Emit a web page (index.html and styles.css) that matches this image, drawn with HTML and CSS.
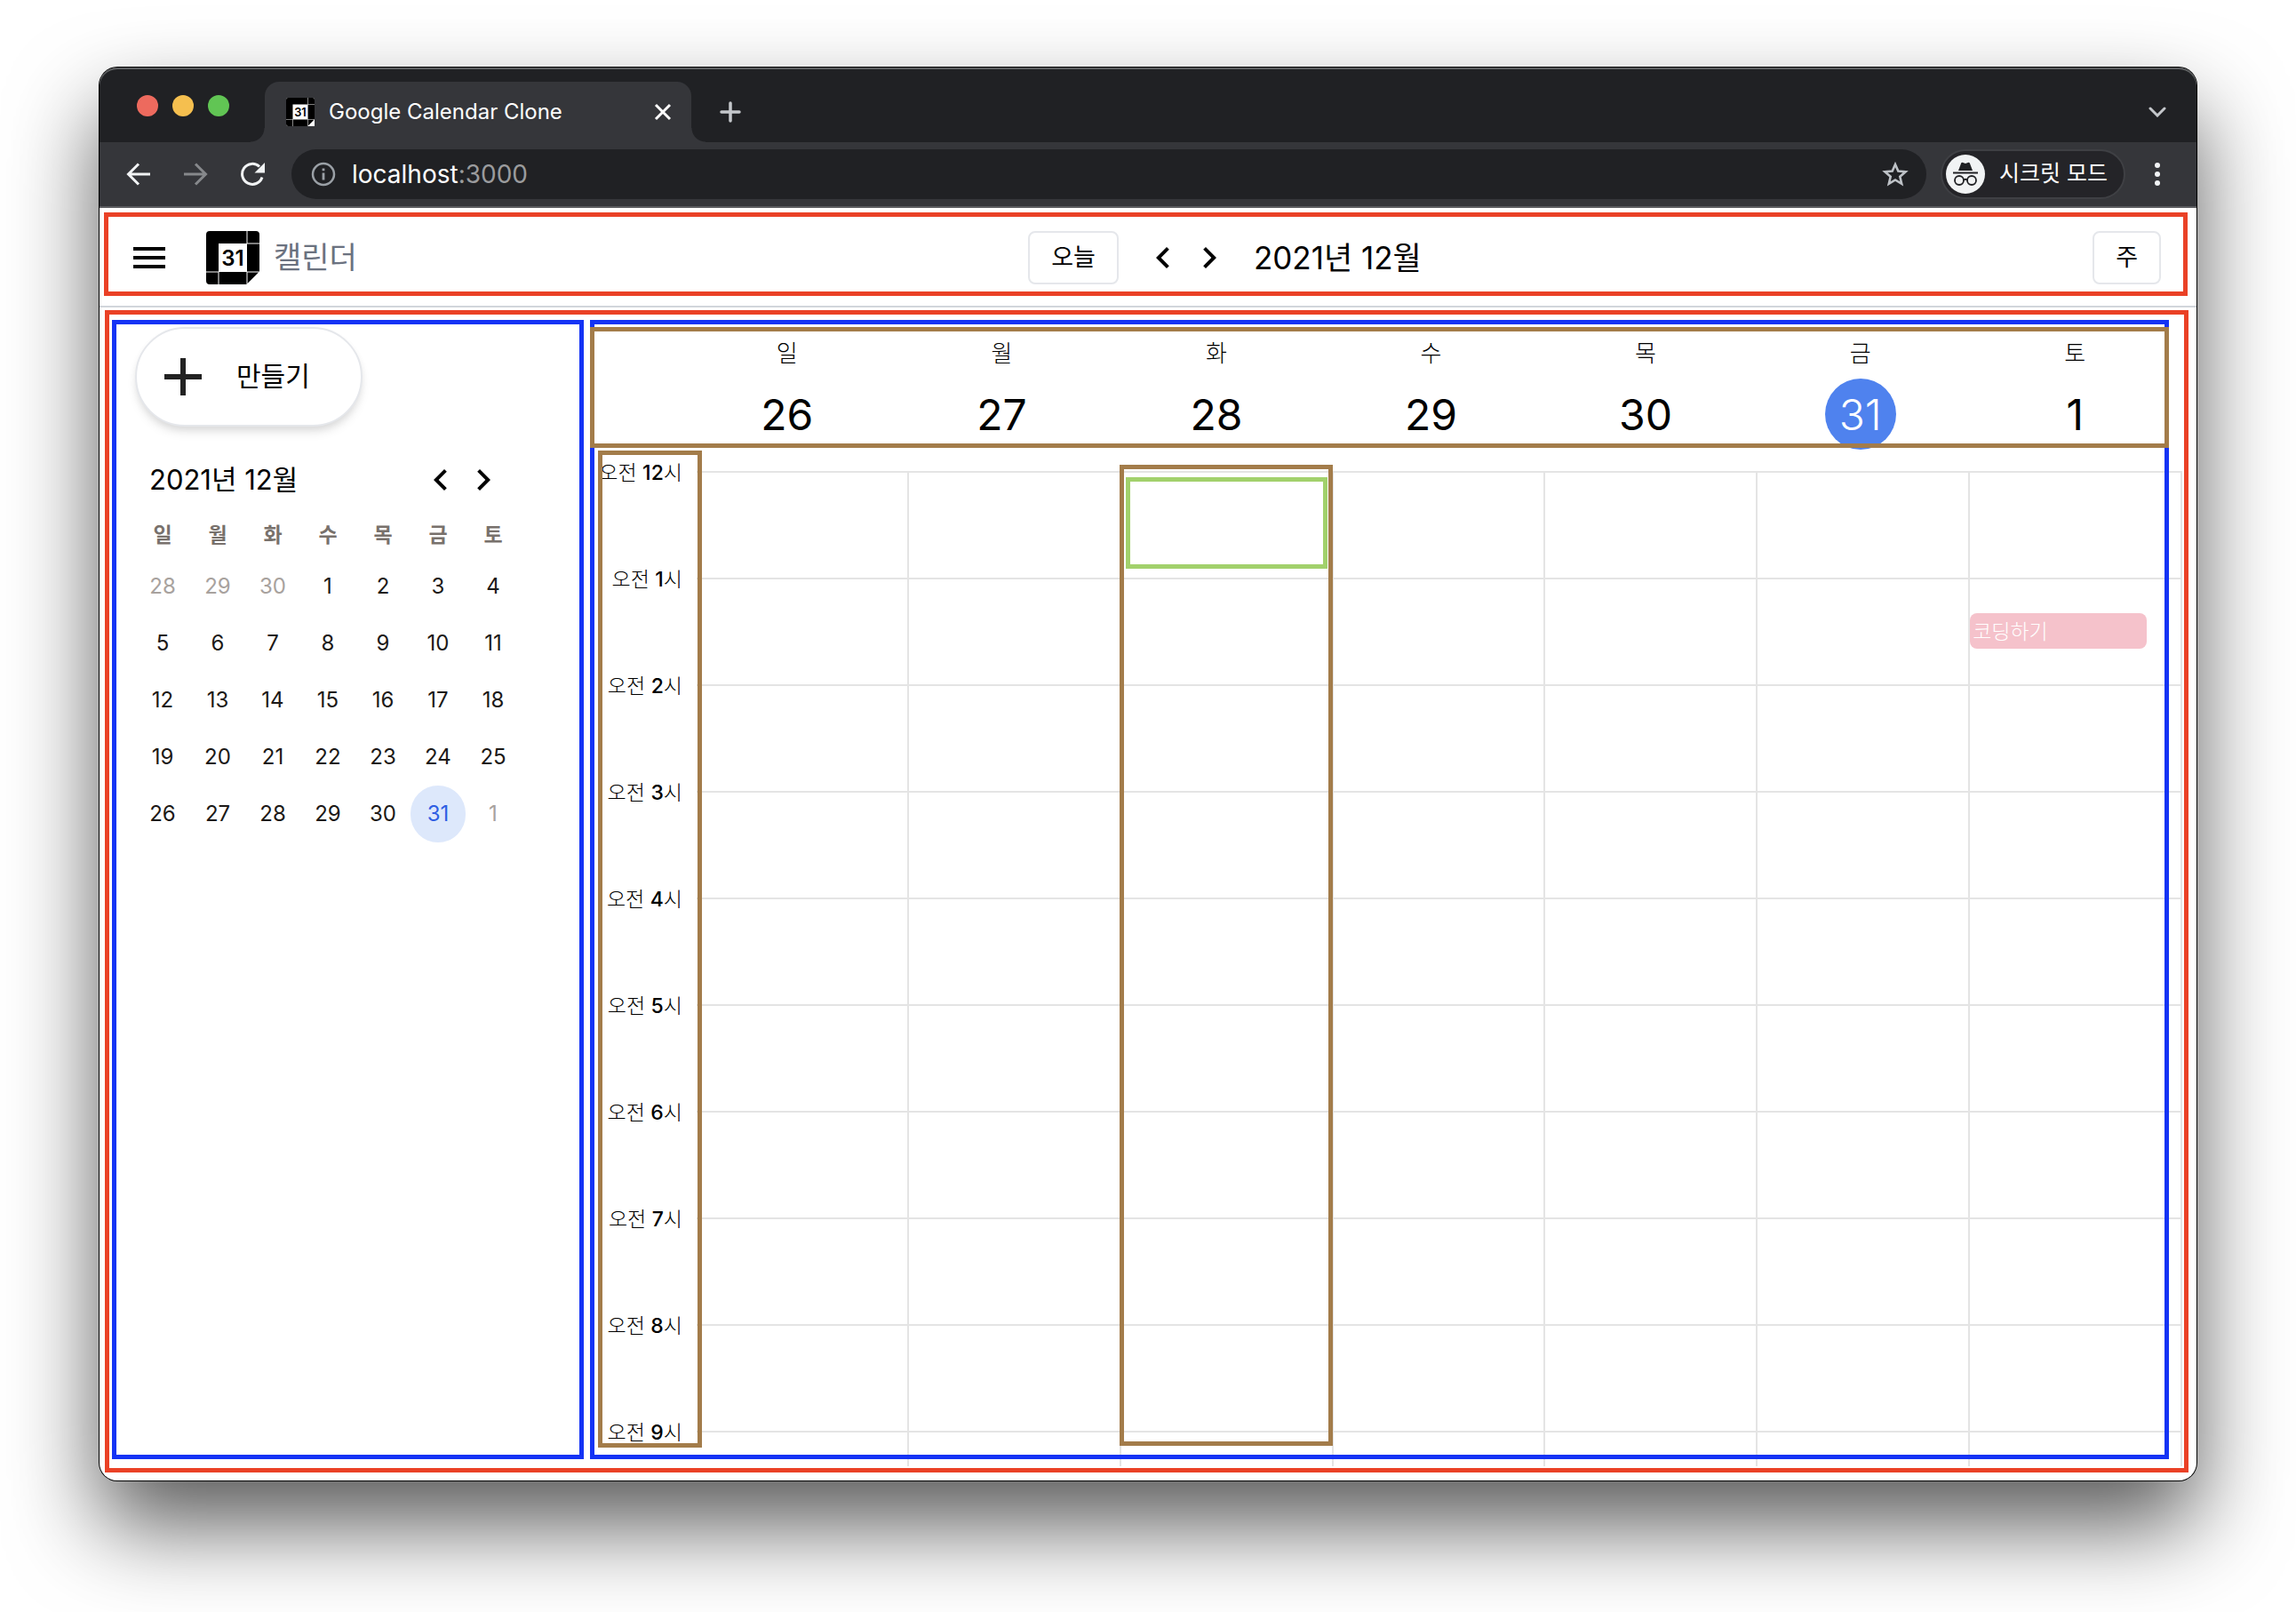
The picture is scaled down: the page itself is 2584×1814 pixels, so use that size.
FILE: index.html
```html
<!DOCTYPE html>
<html lang="ko">
<head>
<meta charset="utf-8">
<meta name="viewport" content="width=device-width, initial-scale=1">
<title>Google Calendar Clone</title>
<link rel="stylesheet" href="styles.css">
</head>
<body>
<svg class="sprite" aria-hidden="true">
  <symbol id="logo" viewBox="0 0 60 60">
    <path fill="#fff" d="M4 0h52a4 4 0 0 1 4 4v56H4a4 4 0 0 1-4-4V4a4 4 0 0 1 4-4z"/>
    <path d="M4 0h41.500v14H14v31.500H0V4a4 4 0 0 1 4-4zM46.500 0H56a4 4 0 0 1 4 4v9.500H46.500zM46 14.500h14v31H46zM14.500 46h31v14h-31zM0 46.500h13.500V60H4a4 4 0 0 1-4-4zM46.500 46.500H59L46.500 59z"/>
    <text x="30" y="39" text-anchor="middle" class="logo-text">31</text>
  </symbol>
  <symbol id="prev" viewBox="0 0 24 24"><path d="M15.41 7.41 14 6l-6 6 6 6 1.41-1.41L10.83 12z"/></symbol>
  <symbol id="next" viewBox="0 0 24 24"><path d="M10 6 8.59 7.41 13.17 12l-4.58 4.59L10 18l6-6z"/></symbol>
</svg>

<div class="window">
  <div class="chrome">
    <div class="tabs">
      <div class="lights"><span class="light red"></span><span class="light yellow"></span><span class="light green"></span></div>
      <div class="tab">
        <svg class="favicon"><use href="#logo"/></svg>
        <span class="tab-title">Google Calendar Clone</span>
        <button class="plain" aria-label="탭 닫기"><svg width="20" height="20" viewBox="0 0 20 20" fill="none" stroke="#fff" stroke-width="3"><path d="M2 2l16 16M18 2 2 18"/></svg></button>
      </div>
      <button class="plain new-tab" aria-label="새 탭"><svg width="24" height="24" viewBox="0 0 24 24" fill="none" stroke="#c4c7cb" stroke-width="3.500" stroke-linecap="round"><path d="M12 2v20M2 12h20"/></svg></button>
      <button class="plain tab-search" aria-label="탭 검색"><svg width="20" height="12" viewBox="0 0 20 12" fill="none" stroke="#c4c7cb" stroke-width="3" stroke-linecap="round"><path d="M2 2l8 8 8-8"/></svg></button>
    </div>
    <div class="toolbar">
      <button class="plain" aria-label="뒤로"><svg width="28" height="28" viewBox="0 0 28 28" fill="none" stroke="#f1f3f4" stroke-width="3"><path d="M27 14H3M14 2.500 2.500 14 14 25.500"/></svg></button>
      <button class="plain" aria-label="앞으로"><svg width="28" height="28" viewBox="0 0 28 28" fill="none" stroke="#86888b" stroke-width="3"><path d="M1 14h24M14 2.500 25.500 14 14 25.500"/></svg></button>
      <button class="plain" aria-label="새로고침"><svg width="28" height="28" viewBox="0 0 28 28"><path fill="none" stroke="#f1f3f4" stroke-width="3" d="M25 17.500A11.500 11.500 0 1 1 22 5.500"/><path fill="#f1f3f4" d="M28 1v11.500H16.500z"/></svg></button>
      <div class="address">
        <svg width="28" height="28" viewBox="0 0 28 28"><circle cx="14" cy="14" r="12" fill="none" stroke="#9aa0a6" stroke-width="2.500"/><path fill="#9aa0a6" d="M12.600 12.500h2.800v8h-2.800zM12.600 7.500h2.800v2.800h-2.800z"/></svg>
        <span class="url">localhost<span class="port">:3000</span></span>
        <button class="plain" aria-label="북마크"><svg width="30" height="30" viewBox="0 0 30 30" fill="none" stroke="#bdc1c6" stroke-width="2.600"><path d="M15 4l3.300 7.600 8.300.7-6.300 5.400 1.900 8.100L15 21.500l-7.200 4.300 1.900-8.100-6.300-5.400 8.300-.7z"/></svg></button>
      </div>
      <div class="incognito">
        <svg width="44" height="44" viewBox="0 0 44 44"><circle cx="22" cy="22" r="22" fill="#f1f3f4"/><g fill="#202124"><path d="M14 18 17 10q.6-1.600 2.200-1l2.800.9 2.800-.9q1.600-.6 2.200 1l3 8zM8 19.500h28v2H8z"/></g><g fill="none" stroke="#202124" stroke-width="1.800"><circle cx="15" cy="29" r="5"/><circle cx="29" cy="29" r="5"/><path d="M20 28.500q2-1.500 4 0"/></g></svg>
        <span>시크릿 모드</span>
      </div>
      <button class="plain menu-dots" aria-label="메뉴"><svg width="8" height="28" viewBox="0 0 8 28" fill="#f1f3f4"><circle cx="4" cy="4" r="3"/><circle cx="4" cy="14" r="3"/><circle cx="4" cy="24" r="3"/></svg></button>
    </div>
  </div>

  <header class="app-header">
    <div class="brand">
      <button class="plain" aria-label="사이드바"><svg width="36" height="24" viewBox="0 0 36 24"><path d="M0 0h36v4H0zM0 10h36v4H0zM0 20h36v4H0z"/></svg></button>
      <svg class="logo"><use href="#logo"/></svg>
      <h1 class="brand-name">캘린더</h1>
    </div>
    <div class="period">
      <button class="outlined">오늘</button>
      <div class="pager">
        <button class="plain" aria-label="이전 주"><svg class="chevron"><use href="#prev"/></svg></button>
        <button class="plain" aria-label="다음 주"><svg class="chevron"><use href="#next"/></svg></button>
      </div>
      <h2 class="period-title">2021년 12월</h2>
    </div>
    <button class="outlined">주</button>
    <div class="frame frame-header"></div>
  </header>

  <main class="app-main">
    <aside class="sidebar">
      <button class="create">
        <svg width="42" height="42" viewBox="0 0 42 42"><path fill="#222" d="M18 0h6v18h18v6H24v18h-6V24H0v-6h18z"/></svg>
        <span>만들기</span>
      </button>
      <div class="mini-head">
        <h3 class="mini-title">2021년 12월</h3>
        <button class="plain" aria-label="이전 달"><svg class="chevron"><use href="#prev"/></svg></button>
        <button class="plain" aria-label="다음 달"><svg class="chevron"><use href="#next"/></svg></button>
      </div>
      <table class="mini">
        <thead><tr><th>일</th><th>월</th><th>화</th><th>수</th><th>목</th><th>금</th><th>토</th></tr></thead>
        <tbody>
          <tr><td class="other">28</td><td class="other">29</td><td class="other">30</td><td>1</td><td>2</td><td>3</td><td>4</td></tr>
          <tr><td>5</td><td>6</td><td>7</td><td>8</td><td>9</td><td>10</td><td>11</td></tr>
          <tr><td>12</td><td>13</td><td>14</td><td>15</td><td>16</td><td>17</td><td>18</td></tr>
          <tr><td>19</td><td>20</td><td>21</td><td>22</td><td>23</td><td>24</td><td>25</td></tr>
          <tr><td>26</td><td>27</td><td>28</td><td>29</td><td>30</td><td class="selected">31</td><td class="other">1</td></tr>
        </tbody>
      </table>
      <div class="frame frame-sidebar"></div>
    </aside>

    <section class="week">
      <div class="week-head">
        <div class="day"><span class="day-name">일</span><span class="day-number">26</span></div>
        <div class="day"><span class="day-name">월</span><span class="day-number">27</span></div>
        <div class="day"><span class="day-name">화</span><span class="day-number">28</span></div>
        <div class="day"><span class="day-name">수</span><span class="day-number">29</span></div>
        <div class="day"><span class="day-name">목</span><span class="day-number">30</span></div>
        <div class="day"><span class="day-name">금</span><span class="day-number today">31</span></div>
        <div class="day"><span class="day-name">토</span><span class="day-number">1</span></div>
        <div class="frame frame-days"></div>
      </div>
      <div class="week-body">
        <div class="hour"><span class="time">오전 <b>12</b>시</span><div class="cell"></div><div class="cell"></div><div class="cell"></div><div class="cell"></div><div class="cell"></div><div class="cell"></div><div class="cell"></div></div>
        <div class="hour"><span class="time">오전 <b>1</b>시</span><div class="cell"></div><div class="cell"></div><div class="cell"></div><div class="cell"></div><div class="cell"></div><div class="cell"></div><div class="cell"><div class="event">코딩하기</div></div></div>
        <div class="hour"><span class="time">오전 <b>2</b>시</span><div class="cell"></div><div class="cell"></div><div class="cell"></div><div class="cell"></div><div class="cell"></div><div class="cell"></div><div class="cell"></div></div>
        <div class="hour"><span class="time">오전 <b>3</b>시</span><div class="cell"></div><div class="cell"></div><div class="cell"></div><div class="cell"></div><div class="cell"></div><div class="cell"></div><div class="cell"></div></div>
        <div class="hour"><span class="time">오전 <b>4</b>시</span><div class="cell"></div><div class="cell"></div><div class="cell"></div><div class="cell"></div><div class="cell"></div><div class="cell"></div><div class="cell"></div></div>
        <div class="hour"><span class="time">오전 <b>5</b>시</span><div class="cell"></div><div class="cell"></div><div class="cell"></div><div class="cell"></div><div class="cell"></div><div class="cell"></div><div class="cell"></div></div>
        <div class="hour"><span class="time">오전 <b>6</b>시</span><div class="cell"></div><div class="cell"></div><div class="cell"></div><div class="cell"></div><div class="cell"></div><div class="cell"></div><div class="cell"></div></div>
        <div class="hour"><span class="time">오전 <b>7</b>시</span><div class="cell"></div><div class="cell"></div><div class="cell"></div><div class="cell"></div><div class="cell"></div><div class="cell"></div><div class="cell"></div></div>
        <div class="hour"><span class="time">오전 <b>8</b>시</span><div class="cell"></div><div class="cell"></div><div class="cell"></div><div class="cell"></div><div class="cell"></div><div class="cell"></div><div class="cell"></div></div>
        <div class="hour"><span class="time">오전 <b>9</b>시</span><div class="cell"></div><div class="cell"></div><div class="cell"></div><div class="cell"></div><div class="cell"></div><div class="cell"></div><div class="cell"></div></div>
        <div class="week-overlay">
          <div class="mark mark-times"></div>
          <div class="mark mark-day"><div class="mark mark-hour"></div></div>
        </div>
      </div>
      <div class="frame frame-week"></div>
    </section>
    <div class="frame frame-main"></div>
  </main>
</div>
</body>
</html>
```

FILE: styles.css
```css
* { box-sizing: border-box; }

body {
  margin: 0;
  min-height: 100vh;
  padding: 76px 112px 148px;
  display: flex;
  background: #fff;
  color: #000;
  font-family: Inter, "Noto Sans CJK KR", sans-serif;
  font-size: 24px;
  line-height: 1.25;
  overflow: hidden;
}

h1, h2, h3 { margin: 0; font-weight: 400; }
svg { display: block; flex: none; }
button { font: inherit; color: inherit; cursor: pointer; }
.plain { padding: 0; border: 0; background: none; flex: none; }
.sprite { display: none; }
.logo-text { font: 600 24px Inter, sans-serif; }
.chevron { width: 48px; height: 48px; }

.window {
  flex: 1;
  min-width: 0;
  height: calc(100vh - 224px);
  display: flex;
  flex-direction: column;
  border-radius: 20px;
  background: #fff;
  overflow: hidden;
  box-shadow: 0 0 0 1px #000, 0 50px 100px rgba(0, 0, 0, 0.65);
}

/* browser chrome */
.chrome {
  flex: none;
  background: #35363a;
  color: #fff;
  border-bottom: 2px solid #5c5d60;
}
.tabs {
  display: flex;
  align-items: center;
  height: 84px;
  padding: 16px 34px 0 42px;
  background: #202124;
  border-radius: 20px 20px 0 0;
  box-shadow: inset 0 2px #5d5f61;
}
.lights { display: flex; gap: 16px; width: 144px; padding-bottom: 14px; }
.light { width: 24px; height: 24px; border-radius: 50%; }
.red { background: #ed6a5e; }
.yellow { background: #f5bf4f; }
.green { background: #61c554; }
.tab {
  position: relative;
  display: flex;
  align-items: center;
  gap: 16px;
  width: 480px;
  height: 68px;
  padding: 0 22px 0 24px;
  background: #35363a;
  border-radius: 16px 16px 0 0;
}
.tab::before, .tab::after {
  content: "";
  position: absolute;
  bottom: 0;
  width: 16px;
  height: 16px;
}
.tab::before { left: -16px; background: radial-gradient(circle at 0 0, transparent 15px, #35363a 16px); }
.tab::after { right: -16px; background: radial-gradient(circle at 100% 0, transparent 15px, #35363a 16px); }
.favicon { width: 32px; height: 32px; }
.tab-title { flex: 1; }
.new-tab { margin-left: 32px; }
.tab-search { margin-left: auto; }

.toolbar {
  display: flex;
  align-items: center;
  gap: 36px;
  height: 72px;
  padding: 0 40px 0 30px;
}
.address {
  flex: 1;
  display: flex;
  align-items: center;
  gap: 18px;
  height: 56px;
  margin-left: -6px;
  padding: 0 20px 0 22px;
  border-radius: 28px;
  background: #202124;
  font-size: 28px;
}
.url { flex: 1; }
.port { color: #9a9b9d; }
.incognito {
  display: flex;
  align-items: center;
  gap: 16px;
  height: 56px;
  margin-left: -20px;
  padding: 0 18px 0 4px;
  border: 2px solid #3f4044;
  border-radius: 28px;
  background: #242428;
  font-size: 25px;
}
.menu-dots { margin-left: -4px; }

/* annotation rectangles drawn over the layout */
.frame { position: absolute; border: 5px solid; pointer-events: none; }
.mark { border: 5px solid #a37c4a; }
.frame-header { inset: 5px 10px 11px 5px; border-color: #ea4126; }
.frame-main { inset: 3px 9px 9px 6px; border-color: #ea4126; }
.frame-sidebar { inset: 14px 7px -8px 14px; border-color: #1433f5; }
.frame-week { inset: 14px 15px -8px 0; border-color: #1433f5; }
.frame-days { inset: 22px 15px 2px 0; z-index: 1; border-color: #a37c4a; }
.frame-sidebar, .frame-week { bottom: 8px; }

/* application header */
.app-header {
  position: relative;
  flex: none;
  display: flex;
  align-items: center;
  justify-content: space-between;
  height: 112px;
  padding: 2px 40px 0 38px;
  border-bottom: 2px solid #d1d5db;
}
.brand { display: flex; align-items: center; }
.logo { width: 60px; height: 60px; margin: 0 16px 0 46px; }
.brand-name { color: #6b7280; font-size: 34px; line-height: 48px; }
.period { display: flex; align-items: center; gap: 26px; }
.pager { display: flex; gap: 4px; }
.period-title { font-size: 35px; line-height: 48px; }
.outlined {
  height: 60px;
  padding: 0 24px;
  border: 2px solid #e5e7eb;
  border-radius: 8px;
  background: #fff;
  font-size: 27px;
}

/* main area */
.app-main {
  position: relative;
  flex: 1;
  min-height: 0;
  display: grid;
  grid-template-columns: 552px minmax(0, 1fr);
  padding: 0 16px 16px 0;
}
.sidebar { position: relative; padding: 22px 0 0 40px; }
.create {
  display: flex;
  align-items: center;
  gap: 39px;
  height: 112px;
  width: 256px;
  padding: 0 31px;
  border: 2px solid #e5e7eb;
  border-radius: 56px;
  background: #fff;
  box-shadow: 0 8px 12px -2px rgba(0, 0, 0, 0.1), 0 4px 8px -2px rgba(0, 0, 0, 0.08);
  font-size: 30px;
}
.mini-head {
  display: flex;
  align-items: center;
  width: 434px;
  margin: 36px 0 12px;
  padding: 0 18px 0 16px;
}
.mini-title { flex: 1; font-size: 31px; line-height: 48px; }
.mini { table-layout: fixed; width: 434px; border-collapse: collapse; color: #1c1917; }
.mini th, .mini td { padding: 0; text-align: center; }
.mini th { height: 52px; color: #78716c; font-size: 23px; font-weight: 700; }
.mini td { height: 64px; }
.mini .other { color: #a8a29e; }
.mini .selected { border-radius: 31px; background: #dde8fb; color: #2f5fe3; }

.week { position: relative; display: flex; flex-direction: column; min-height: 0; }
.week-head {
  position: relative;
  flex: none;
  display: grid;
  grid-template-columns: repeat(7, 1fr);
  padding: 22px 0 0 101px;
}
.day { display: flex; flex-direction: column; align-items: center; }
.day-name { height: 58px; font-size: 26px; font-weight: 300; line-height: 60px; }
.day-number { width: 80px; height: 80px; font-size: 48px; line-height: 82px; text-align: center; }
.today { border-radius: 50%; background: #4f82ee; color: #fff; font-weight: 300; }

.week-body { position: relative; flex: 1; min-height: 0; padding-top: 24px; overflow: hidden; }
.hour, .week-overlay { display: grid; grid-template-columns: 120px repeat(7, 1fr); }
.hour { height: 120px; }
.time {
  height: 40px;
  margin-top: -18px;
  padding-right: 16px;
  font-size: 23px;
  font-weight: 300;
  line-height: 40px;
  text-align: right;
  white-space: nowrap;
}
.time b { font-weight: 500; }
.cell { border-top: 2px solid #e4e4e4; border-right: 2px solid #e4e4e4; }
.event {
  height: 40px;
  margin: 38px 38px 0 0;
  padding: 0 3px;
  border-radius: 8px;
  background: #f5c2cb;
  color: #fff;
  font-size: 23px;
  font-weight: 300;
  line-height: 42px;
}
.week-overlay { position: absolute; inset: 0; pointer-events: none; }
.mark-times { margin: 1px -6px 21px 9px; }
.mark-day { grid-column: 4; margin: 17px 1px 23px -2px; padding: 9px 1px 0 2px; }
.mark-hour { height: 103px; border-color: #a2d16c; }
```
